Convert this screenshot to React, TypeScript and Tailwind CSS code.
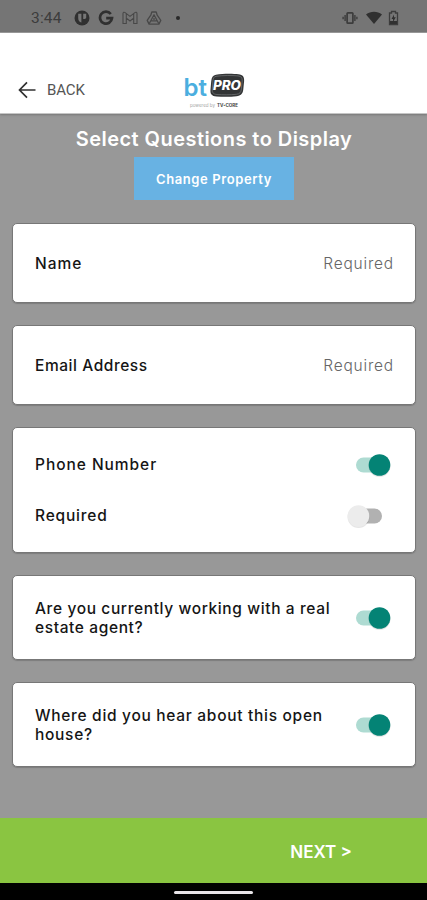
import React, { useState } from 'react';

interface SwitchProps {
  checked: boolean;
  onChange: (checked: boolean) => void;
  label: string;
}

const Switch: React.FC<SwitchProps> = ({ checked, onChange, label }) => (
  <button
    role="switch"
    aria-checked={checked}
    aria-label={label}
    onClick={() => onChange(!checked)}
    className="mr-[2px] h-6 w-[46px] shrink-0"
  >
    <svg viewBox="0 0 46 24" className="h-6 w-[46px] overflow-visible">
      <rect x={10} y="4.5" width="26" height="15" rx="7.5" fill={checked ? '#aedbd2' : '#b1b1b1'} />
      <circle cx={checked ? 33.5 : 12.5} cy="13" r="11" fill="#000000" opacity="0.1" />
      <circle cx={checked ? 33.5 : 12.5} cy="12" r="10.8" fill={checked ? '#048375' : '#ececec'} />
    </svg>
  </button>
);

const Card: React.FC<{ className: string; children: React.ReactNode }> = ({ className, children }) => (
  <section
    className={`flex flex-col justify-center rounded-[5px] border border-[#777777] bg-white pr-[21px] pl-[22px] shadow-[0_1px_1px_#7d7d7d] ${className}`}
  >
    {children}
  </section>
);

const StatusBar = () => (
  <div className="flex h-[33px] items-center border-b border-[#9a9a9a] bg-[#757575] pt-1 pr-[28px] pl-[31px] text-[#303030]">
    <span className="w-[43px] pt-px font-[Roboto] text-[15.5px] leading-none tracking-[0.2px] text-[#3c3c3c]">3:44</span>
    <div className="flex items-center gap-2">
      <svg viewBox="0 0 16 16" className="size-4">
        <circle cx="8" cy="8" r="7.5" fill="currentColor" />
        <path d="M4.2 3.8h3.2v8.6C5.4 12 4.2 10.4 4.2 8zM9.2 3.8h3v3.7c0 .9-.7 1.4-1.5 1.4H9.2z" fill="#777777" />
      </svg>
      <svg viewBox="0 0 16 16" className="size-4" fill="none" stroke="currentColor" strokeWidth="2.7">
        <path d="M12.8 4A6 6 0 1 0 14 8.2H8.2" />
      </svg>
      <svg viewBox="0 0 16 16" className="size-4" fill="none" stroke="#484848" strokeWidth="1.1">
        <path d="M1 13.5V3.6c0-1.3 1.2-1.7 2.1-1L8 6.4l4.9-3.8c.9-.7 2.1-.3 2.1 1v9.9h-3.3V8.1L8 11 4.3 8.1v5.4zM4.3 3.7v4.4M11.7 3.7v4.4" />
      </svg>
      <svg viewBox="0 0 16 16" className="size-4" fill="none" stroke="#484848" strokeWidth="1.3" strokeLinejoin="round">
        <path d="M5.8 2h4.4l1 3.2 3.6 5.2-1.9 3.7H3.1l-1.9-3.7 3.6-5.2z" />
        <path d="M8 4.8l3.2 6H4.8zM4.8 10.8l-1.7 3M11.2 10.8l1.7 3" />
        <path d="M8 8v2" />
      </svg>
      <span className="ml-[6px] size-1 rounded-full bg-[#292929]" />
    </div>
    <div className="ml-auto flex items-center">
      <svg viewBox="0 0 16 16" className="mr-2 size-4" fill="none" stroke="#3c3c3c">
        <rect x="5.1" y="2.8" width="5.8" height="10.4" rx="0.8" strokeWidth="1.7" />
        <path d="M3.1 5v6M12.9 5v6M1.1 6.8v2.4M14.9 6.8v2.4" strokeWidth="1.4" />
      </svg>
      <svg viewBox="0 0 16 16" className="mr-[6px] size-4" fill="currentColor">
        <path d="M0 4.6C4.7.8 11.3.8 16 4.6L8 14z" />
      </svg>
      <svg viewBox="0 0 11 16" className="h-4 w-[11px]">
        <path d="M1.5 3h2V1.5h4V3h2v11.5h-8z" fill="none" stroke="#3c3c3c" strokeWidth="1.3" />
        <path d="M2 11h7v3H2z" fill="currentColor" />
        <path d="M6 4.5L3.5 9H5v3l2.8-4.7H6z" fill="currentColor" />
      </svg>
    </div>
  </div>
);

const Logo = () => (
  <svg viewBox="0 0 64 38" className="h-[38px] w-16" role="img" aria-label="bt PRO">
    <text x="1.5" y="23.5" fontFamily="Inter, sans-serif" fontSize="24" fontWeight="600" fill="#4baedf" textLength="23.5" lengthAdjust="spacingAndGlyphs">bt</text>
    <path d="M34 2.7C41 1.5 51 1.5 56.5 2.3c4.3.6 6 2.6 5.6 7l-.8 8c-.4 4.6-2.5 6.4-6.8 6.9-6 .7-14 .7-20 .2-4.8-.4-6.5-2.4-6-7l.7-8c.4-4 1.6-6.1 4.8-6.7z" fill="#333536" />
    <path d="M34 4.3c7-1 16-1 22-.4 3.2.4 4.5 1.8 4.2 5l-.8 8c-.3 3.6-1.7 5.1-5 5.4-6 .7-14 .6-19.5.2-3.6-.3-5-1.9-4.6-5.4l.6-8c.3-3 1-4.3 3.1-4.8z" fill="none" stroke="#75787a" strokeWidth="0.7" />
    <text x="31" y="17.8" fontFamily="Inter, sans-serif" fontSize="12.8" fontWeight="800" fontStyle="italic" fill="#ffffff" textLength="28" lengthAdjust="spacingAndGlyphs">PRO</text>
    <text x="8" y="35" fontFamily="Inter, sans-serif" fontSize="4.2" fill="#a5a5a5" textLength="25" lengthAdjust="spacingAndGlyphs">powered by</text>
    <text x="35" y="35" fontFamily="Inter, sans-serif" fontSize="4.3" fontWeight="700" fill="#444444" textLength="21" lengthAdjust="spacingAndGlyphs">TV•CORE</text>
  </svg>
);

const labelClass = 'text-[15.5px] leading-[19px] font-medium text-[#151515]';
const requiredClass = 'pt-[2px] text-[15.5px] leading-5 font-light tracking-[0.8px] text-[#666666]';

export default function App() {
  const [phone, setPhone] = useState(true);
  const [phoneRequired, setPhoneRequired] = useState(false);
  const [agent, setAgent] = useState(true);
  const [hear, setHear] = useState(true);

  return (
    <div className="flex h-[900px] w-[427px] flex-col overflow-hidden bg-[#989898] font-[Inter,sans-serif]">
      <StatusBar />

      <header className="grid h-[81px] shrink-0 grid-cols-[1fr_64px_1fr] items-end border-b border-[#c5c5c5] bg-white pb-[3px] shadow-[0_1px_2px_#777777]">
        <button className="mb-[10px] flex items-center gap-[11px] pl-[18px] text-[#303030]">
          <svg viewBox="0 0 18 18" className="size-[18px]" fill="none" stroke="currentColor" strokeWidth="1.7">
            <path d="M17.5 9H1.6M9 1.3L1.5 9 9 16.7" />
          </svg>
          <span className="font-[Roboto] text-[15px] leading-5 tracking-[-0.1px] text-[#555555]">BACK</span>
        </button>
        <Logo />
      </header>

      <main className="flex flex-1 flex-col pr-[11px] pl-3">
        <h1 className="mt-[11px] text-center text-[20px] leading-7 font-semibold tracking-[0.45px] text-white">
          Select Questions to Display
        </h1>
        <button className="mt-1 h-[43px] w-[160px] self-center bg-[#68b2e3] pt-[2px] text-[13px] font-semibold tracking-[0.6px] text-white">
          Change Property
        </button>

        <div className="mt-[23px] flex flex-col">
          <Card className="h-[80px]">
            <div className="flex items-center justify-between">
              <span className={`${labelClass} tracking-[1px]`}>Name</span>
              <span className={requiredClass}>Required</span>
            </div>
          </Card>

          <Card className="mt-[22px] h-[80px]">
            <div className="flex items-center justify-between">
              <span className={`${labelClass} tracking-[0.56px]`}>Email Address</span>
              <span className={requiredClass}>Required</span>
            </div>
          </Card>

          <Card className="mt-[22px] h-[126px] gap-[27px]">
            <div className="flex items-center justify-between">
              <span className={`${labelClass} tracking-[0.95px]`}>Phone Number</span>
              <Switch checked={phone} onChange={setPhone} label="Phone Number" />
            </div>
            <div className="flex items-center justify-between">
              <span className={`${labelClass} tracking-[0.8px]`}>Required</span>
              <Switch checked={phoneRequired} onChange={setPhoneRequired} label="Phone required" />
            </div>
          </Card>

          <Card className="mt-[22px] h-[85px]">
            <div className="flex items-center justify-between">
              <span className={`${labelClass} tracking-[0.62px] whitespace-nowrap`}>
                Are you currently working with a real
                <br />
                estate agent?
              </span>
              <Switch checked={agent} onChange={setAgent} label="Working with an agent" />
            </div>
          </Card>

          <Card className="mt-[22px] h-[85px]">
            <div className="flex items-center justify-between">
              <span className={`${labelClass} tracking-[0.7px] whitespace-nowrap`}>
                Where did you hear about this open
                <br />
                house?
              </span>
              <Switch checked={hear} onChange={setHear} label="Heard about open house" />
            </div>
          </Card>
        </div>
      </main>

      <footer className="flex h-[65px] shrink-0 items-center justify-end bg-[#8ac541] pt-[4px] pr-[75px]">
        <button className="text-[17px] font-semibold text-white">NEXT &gt;</button>
      </footer>
      <div className="flex h-[17px] shrink-0 items-center justify-center bg-black pt-px">
        <div className="h-[3px] w-[79px] rounded-full bg-[#e8e4e8]" />
      </div>
    </div>
  );
}
